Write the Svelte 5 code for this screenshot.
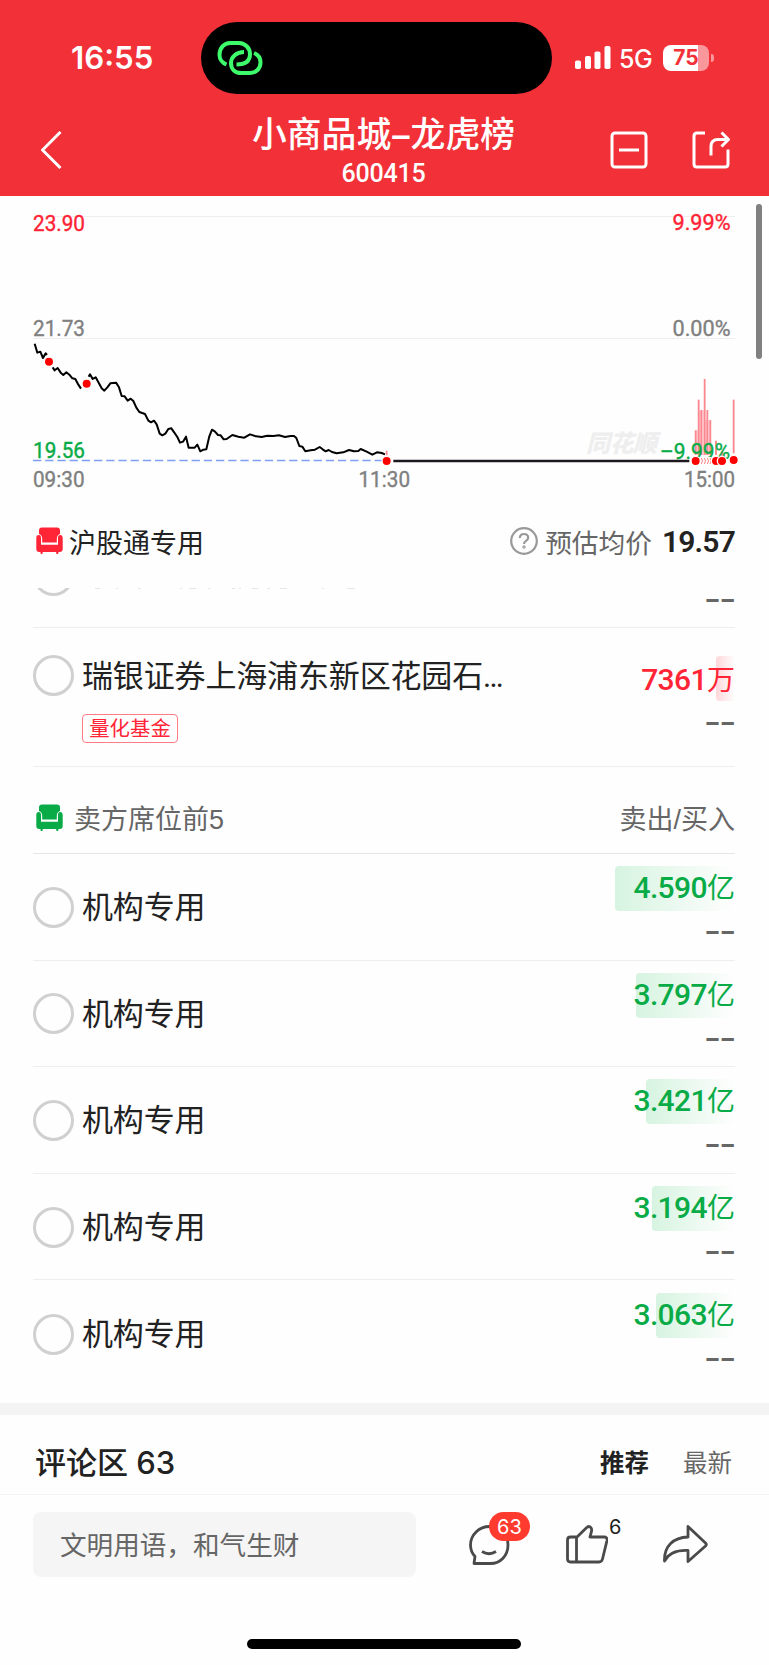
<script>
    // 卖方席位
    let sellers = [
        { id: 1, name: '机构专用', amount: '4.590', bar: 120 },
        { id: 2, name: '机构专用', amount: '3.797', bar: 99 },
        { id: 3, name: '机构专用', amount: '3.421', bar: 89 },
        { id: 4, name: '机构专用', amount: '3.194', bar: 83 },
        { id: 5, name: '机构专用', amount: '3.063', bar: 79 },
    ];

    // 分时线, 三倍坐标
    const lines = [
        '104,446 108,460 112,473 121,470 129,489 137,475 141,480',
        '158,517 164,526 173,519 182,533 190,540 199,532 208,539 217,550 226,552 235,569 243,581',
        '266,545 270,538 278,552 287,547 296,563 305,580 313,587 322,577 331,565 348,563 357,577 365,603 374,604 383,617 392,611 400,618 409,638 418,651 435,657 445,677 453,682 462,677 470,688 479,716 487,721 496,716 505,702 514,700 523,713 532,726 540,743 549,740 558,725 566,758 584,758 592,749 601,769 610,764 619,763 628,724 636,704 645,710 654,720 662,721 671,733 680,732 697,720 715,725 733,728 750,718 768,724 785,726 802,722 820,723 837,721 855,726 872,723 882,723 889,729 898,753 907,755 916,769 932,766 945,764 959,756 968,763 977,769 986,765 996,771 1010,775 1030,772 1047,765 1062,769 1075,768 1082,762 1100,770 1117,779 1131,772 1145,774 1155,778',
    ];

    // 成交柱: x, 顶部, 底部
    const volumes = [
        [947, 706, 780],
        [956, 614, 780],
        [964, 645, 780],
        [974, 552, 780],
        [982, 645, 780],
        [991, 675, 780],
        [1008, 737, 780],
        [1026, 768, 782],
        [1061, 614, 775],
    ];
    const arcs = [964, 973, 982, 990];
</script>

{#snippet chair()}
    <svg class="chair" viewBox="0 0 27 28">
        <path d="M6 .5h15q3 0 3 3v3.500q-3.200 1-3.200 5v3.500H6.200V12q0-4-3.200-5V3.500q0-3 3-3z" />
        <path d="M2.700 8q2.300 0 2.300 3v6.700h17V11q0-3 2.300-3t2.400 3v11q0 3-3 3h-1.200l-.4 2h-1.600l-.4-2H6.800l-.4 2H4.800l-.4-2H3.300q-3 0-3-3V11q0-3 2.400-3z" />
    </svg>
{/snippet}

<div class="page">
    <header>
        <div class="status">
            <span class="time">16:55</span>
            <div class="island">
                <svg width="46" height="36" viewBox="0 0 46 36" fill="none" stroke="#3dfb6b" stroke-width="4">
                    <path d="M9.500 24.500C5.500 23 2.500 19 2.500 15 2.500 7.500 7.500 3 13 3h9C28 3 33 8 33 14c0 7-5 10.500-13.500 10.500" />
                    <path d="M27 12C19.500 12 14 17 14 23c0 6 4 10 10 10h9c6 0 10.500-4.500 10.500-10.500 0-4.500-2.500-8-6.500-9.500" />
                </svg>
            </div>
            <svg class="signal" width="36" height="24" viewBox="0 0 36 24" fill="#fff">
                <rect x="0" y="14.500" width="6" height="8.500" rx="1.800" />
                <rect x="10" y="10" width="6" height="13" rx="1.800" />
                <rect x="19.500" y="5.500" width="6" height="17.500" rx="1.800" />
                <rect x="29.500" y="0" width="6" height="23" rx="1.800" />
            </svg>
            <span class="net">5G</span>
            <div class="battery"><span>75</span></div>
            <i class="tip"></i>
        </div>
        <nav>
            <svg class="back" width="22" height="38" viewBox="0 0 22 38" fill="none" stroke="#fff" stroke-width="3">
                <path d="M19.500 1 1.500 19l18 18" />
            </svg>
            <div class="title">
                <h1>小商品城<span>–</span>龙虎榜</h1>
                <p>600415</p>
            </div>
            <svg width="38" height="38" viewBox="0 0 38 38" fill="none" stroke="#fff" stroke-width="3">
                <rect x="2" y="2" width="34" height="34" rx="3" />
                <path d="M9 19h20" />
            </svg>
            <svg class="out" width="38" height="38" viewBox="0 0 38 38" fill="none" stroke="#fff" stroke-width="3">
                <path d="M13 2H5Q2 2 2 5v28q0 3 3 3h28q3 0 3-3V18.500" />
                <path d="M19 24.500v-9q0-7 7-7h10M29.500 1.500 36.500 8.500l-7 7" />
            </svg>
        </nav>
    </header>

    <svg class="chart" viewBox="0 196 769 304">
        <g stroke="#eee" stroke-width="1">
            <path d="M33 216.500h702M33 338.500h702" />
        </g>
        <path d="M33 460.500h355" stroke="#7f9ef4" stroke-width="1.600" stroke-dasharray="8.300 3.900" />
        <text class="mark" x="586" y="452" textLength="71">同花顺</text>
        <g transform="translate(380 195) scale(.33333)">
            <path d="M947 706h9v-60h18v30h17v104h-44z" fill="#ffd3d7" />
            {#each volumes as [x, top, bottom]}
                <path d="M{x} {top}V{bottom}" stroke="#fb8790" stroke-width="5.500" />
            {/each}
        </g>
        <g class="num">
            <text class="red" x="33" y="230.500" textLength="52" lengthAdjust="spacingAndGlyphs">23.90</text>
            <text class="red" x="672.500" y="230" textLength="58" lengthAdjust="spacingAndGlyphs">9.99%</text>
            <text x="33" y="336" textLength="52" lengthAdjust="spacingAndGlyphs">21.73</text>
            <text x="672.500" y="336" textLength="58" lengthAdjust="spacingAndGlyphs">0.00%</text>
            <text class="green" x="33" y="458" textLength="52" lengthAdjust="spacingAndGlyphs">19.56</text>
            <text class="green" x="660" y="458.500" textLength="70" lengthAdjust="spacingAndGlyphs">–9.99%</text>
            <text x="33" y="487" textLength="51.500" lengthAdjust="spacingAndGlyphs">09:30</text>
            <text x="358.500" y="487" textLength="51.500" lengthAdjust="spacingAndGlyphs">11:30</text>
            <text x="684" y="487" textLength="51" lengthAdjust="spacingAndGlyphs">15:00</text>
        </g>
        <g transform="translate(0 195) scale(.33333)">
            {#each lines as points}
                <polyline {points} fill="none" stroke="#000" stroke-width="6" stroke-linejoin="round" />
            {/each}
            <path d="M1180 798h888" stroke="#1d1820" stroke-width="7.500" />
            <path d="M1160 767v14" stroke="#fb8790" stroke-width="5" />
            <g class="dots">
                <circle cx="147" cy="500" r="14" />
                <circle cx="260" cy="566" r="14" />
                <circle cx="1160" cy="798" r="14" />
            </g>
        </g>
        <g transform="translate(380 195) scale(.33333)">
            <rect x="960" y="786" width="34" height="24" fill="#fff" />
            {#each arcs as x}
                <path d="M{x} 789q7 9 0 18" fill="none" stroke="#ff6b6b" stroke-width="2.500" />
            {/each}
            <g class="dots">
                <circle cx="947" cy="798" r="14" />
                <circle cx="1008" cy="798" r="14" />
                <circle cx="1026" cy="798" r="14" />
                <circle cx="1061" cy="795" r="14" />
            </g>
        </g>
    </svg>
    <div class="scrollbar"></div>

    <div class="seat red">
        {@render chair()}
        <strong>沪股通专用</strong>
        <svg class="help" width="28" height="28" viewBox="0 0 28 28" fill="none" stroke="#999" stroke-width="2.200">
            <circle cx="14" cy="14" r="12.800" />
            <path d="M9.800 11q.2-4 4.200-4t4.200 3.600q0 2-2.200 3.300-2 1.200-2 3" />
            <circle cx="14" cy="20" r=".6" />
        </svg>
        <span class="label">预估均价</span>
        <b>19.57</b>
    </div>

    <div class="list">
        <div class="cut">
            <div class="clip"><i class="radio"></i></div>
            <svg width="264" height="2" viewBox="0 0 264 2" fill="none" stroke="#e6e6e6">
                <path d="M0 .5h5M21 .5h2M43 .5h3M85 .5h2M94 .5h7M113 .5h2M137 .5h3M144 .5h2M157 .5h6M172 .5h3M185 .5h7M227 .5h2M252 .5h8" />
            </svg>
            <em>--</em>
        </div>

        <div class="row ubs">
            <i class="radio"></i>
            <div class="who">
                <span class="name">瑞银证券上海浦东新区花园石<span class="more">...</span></span>
                <span class="tag">量化基金</span>
            </div>
            <div class="money red">
                <div class="amount"><i style="width: 19px"></i><b>7361</b><span>万</span></div>
                <em>--</em>
            </div>
        </div>

        <div class="group green">
            {@render chair()}
            <span>卖方席位前5</span>
            <span class="right">卖出/买入</span>
        </div>

        {#each sellers as seller (seller.id)}
            <div class="row">
                <i class="radio"></i>
                <span class="name">{seller.name}</span>
                <div class="money green">
                    <div class="amount"><i style="width: {seller.bar}px"></i><b>{seller.amount}</b><span>亿</span></div>
                    <em>--</em>
                </div>
            </div>
        {/each}
    </div>

    <div class="comments">
        <h2>评论区 63</h2>
        <span class="on">推荐</span>
        <span>最新</span>
    </div>

    <footer>
        <div class="input">文明用语，和气生财</div>
        <div class="action">
            <svg width="42" height="42" viewBox="0 0 42 42">
                <path d="M6 39.500h16.500C32.500 39.500 40 31.500 40 21 40 10 32 2.500 21.500 2.500S2.500 11 2.500 21c0 5 1.700 8.500 4.500 11.500z" />
                <path d="M14 27.500q7 4.500 14 0" />
            </svg>
            <span class="badge">63</span>
        </div>
        <div class="action like">
            <svg width="42" height="40" viewBox="0 0 42 40">
                <path d="M4.500 13h6.500L21 3.300q2.500-1.800 4 .5 1 1.500.5 3.500L24 13h14q3.500 0 3 3.500l-4.500 18.500Q35.700 38 33 38H4.500Q1.500 38 1.500 35V16q0-3 3-3z" />
                <path d="M10.500 13v25" />
            </svg>
            <span class="count">6</span>
        </div>
        <div class="action share">
            <svg width="46" height="40" viewBox="0 0 46 40">
                <path d="M26 2.500 43.500 19q1.500 1.500 0 3L26 37.500V26.500C14.500 26 6.500 29.500 2.500 37 2 22 11.500 13.500 26 13z" />
            </svg>
        </div>
    </footer>
    <div class="home"></div>
</div>

<style>
    :global(body) {
        background: #fff;
    }

    .page {
        position: relative;
        width: 769px;
        height: 1665px;
        display: flex;
        flex-direction: column;
        overflow: hidden;
        background: #fefefe;
        color: #222;
        font-family: 'Liberation Sans', 'Noto Sans CJK SC', sans-serif;
    }

    svg {
        display: block;
        flex: none;
    }

    h1, h2, p {
        margin: 0;
    }

    i, em {
        font-style: normal;
    }

    header {
        height: 196px;
        flex: none;
        box-sizing: border-box;
        background: #f23038;
        color: #fff;
        padding-top: 22px;
    }

    .status {
        display: flex;
        align-items: center;
        height: 72px;
        padding-left: 71px;
        font-family: Inter, sans-serif;
    }

    .time {
        width: 130px;
        padding-bottom: 1px;
        font-size: 31.200px;
        font-weight: 600;
    }

    .island {
        width: 351px;
        height: 72px;
        box-sizing: border-box;
        padding: 18px 0 0 16px;
        border-radius: 36px;
        background: #000;
    }

    .signal {
        margin: 0 8px 0 23px;
    }

    .net {
        width: 44px;
        padding-top: 1px;
        font-size: 25px;
        font-weight: 500;
        letter-spacing: -0.5px;
    }

    .battery {
        width: 46px;
        height: 26px;
        border-radius: 8px;
        background: linear-gradient(90deg, #fff 35px, #f9979b 35px);
        color: #f23038;
        font-size: 21px;
        font-weight: 700;
        line-height: 26px;
        text-align: center;
    }

    .tip {
        width: 3px;
        height: 8px;
        margin-left: 2px;
        border-radius: 0 4px 4px 0;
        background: #f9979b;
    }

    nav {
        display: flex;
        align-items: center;
        height: 102px;
        padding: 0 39px 0 41px;
    }

    nav svg {
        margin-top: 10px;
    }

    nav .out {
        margin-left: 44px;
    }

    .title {
        flex: 1;
        margin: 7px 0 0 161px;
        padding-right: 67px;
        text-align: center;
    }

    h1 {
        font: 500 34.800px/46px 'Noto Sans CJK SC', sans-serif;
        white-space: nowrap;
    }

    h1 span {
        font-family: 'Liberation Sans', sans-serif;
        font-weight: 700;
    }

    .title p {
        padding-top: 2px;
        font: 500 25px/28px Roboto, sans-serif;
        letter-spacing: -0.200px;
    }

    .chart {
        width: 769px;
        height: 304px;
    }

    .num {
        font: 400 22.500px Roboto, sans-serif;
        fill: #808080;
        stroke: #808080;
        stroke-width: 0.400;
    }

    .num .red {
        fill: #ff2436;
        stroke: #ff2436;
    }

    .num .green {
        fill: #09ab47;
        stroke: #09ab47;
    }

    .mark {
        font: italic 900 24px 'Noto Sans CJK SC', sans-serif;
        fill: #eee;
    }

    .dots circle {
        fill: #f00;
        stroke: #fff;
        stroke-width: 4;
    }

    .scrollbar {
        position: absolute;
        top: 204px;
        right: 7px;
        width: 6px;
        height: 155px;
        border-radius: 3px;
        background: #808080;
    }

    .seat {
        display: flex;
        align-items: center;
        height: 88px;
        flex: none;
        box-sizing: border-box;
        padding: 0 34px 6px 36px;
    }

    .chair {
        width: 27px;
        height: 28px;
        fill: #ff2436;
    }

    .green .chair {
        margin-top: 1px;
        fill: #09ab47;
    }

    .seat strong {
        flex: 1;
        margin-left: 6px;
        font-weight: 400;
        font-size: 27px;
    }

    .label {
        margin: 0 10px 0 7px;
        font-size: 26.700px;
        color: #666;
    }

    .seat b {
        font: 600 30px Roboto, sans-serif;
        letter-spacing: -0.800px;
    }

    .list {
        padding: 0 34px 0 33px;
    }

    .cut {
        display: flex;
        height: 39px;
        border-bottom: 1px solid #eee;
    }

    .clip {
        display: flex;
        align-items: flex-end;
        width: 62px;
        height: 8px;
        overflow: hidden;
    }

    .cut em {
        margin: -10px 1px 0 auto;
    }

    em {
        font: 400 38px/40px Inter, sans-serif;
        letter-spacing: -2.400px;
        margin-right: 1px;
        color: #666;
    }

    .radio {
        flex: none;
        width: 41px;
        height: 41px;
        box-sizing: border-box;
        border: 3px solid #d0d0d0;
        border-radius: 50%;
    }

    .row {
        display: flex;
        align-items: center;
        height: 106.600px;
        box-sizing: border-box;
        padding-top: 1px;
        border-bottom: 1px solid #eee;
    }

    .row:last-child {
        border-bottom: 0;
    }

    .name {
        margin-left: 8px;
        padding-top: 2px;
        font-size: 31px;
        line-height: 40px;
        letter-spacing: -0.150px;
    }

    .ubs {
        height: 139px;
        align-items: flex-start;
        padding-top: 27px;
    }

    .ubs .name {
        display: block;
    }

    .more {
        font-family: Roboto, sans-serif;
        letter-spacing: -1.800px;
    }

    .tag {
        display: block;
        width: 96px;
        height: 29px;
        box-sizing: border-box;
        margin: 17px 0 0 8px;
        border: 1px solid #ff7c86;
        border-radius: 4px;
        color: #ff2436;
        font-size: 20.400px;
        line-height: 28px;
        text-align: center;
    }

    .money {
        display: flex;
        flex-direction: column;
        align-items: flex-end;
        margin-left: auto;
        padding-top: 2px;
        color: #09ab47;
    }

    .money em {
        margin-top: -1px;
    }

    .money.red {
        padding-top: 2px;
        color: #ff2436;
    }

    .money.red em {
        margin-top: -1px;
    }

    .amount {
        position: relative;
        height: 45px;
        font-size: 28px;
        line-height: 46px;
        white-space: nowrap;
    }

    .red .amount {
        line-height: 47px;
    }

    .amount i {
        position: absolute;
        top: 0;
        right: 0;
        height: 45px;
        border-radius: 4px;
        background: linear-gradient(90deg, rgba(9, 190, 71, 0.160), rgba(9, 190, 71, 0));
    }

    .red .amount i {
        top: -1px;
        background: linear-gradient(90deg, rgba(255, 36, 54, 0.180), rgba(255, 36, 54, 0));
    }

    .amount span {
        position: relative;
    }

    .amount b {
        position: relative;
        font: 500 30px Roboto, sans-serif;
        letter-spacing: -0.600px;
    }

    .group {
        display: flex;
        align-items: center;
        height: 87px;
        box-sizing: border-box;
        padding: 15px 0 0 3px;
        border-bottom: 1px solid #e6e6e6;
        color: #666;
        font-size: 27px;
    }

    .group span {
        margin-left: 11px;
    }

    .group .right {
        margin-left: auto;
    }

    .comments {
        display: flex;
        align-items: center;
        height: 92px;
        box-sizing: border-box;
        flex: none;
        margin-top: 16px;
        border-top: 12px solid #f4f4f4;
        border-bottom: 1px solid #f4f4f4;
        padding: 15px 37px 0 35px;
        font-size: 24.500px;
        color: #666;
    }

    h2 {
        flex: 1;
        margin-top: -2px;
        font: 500 31px Inter, 'Noto Sans CJK SC', sans-serif;
        color: #222;
    }

    .comments span {
        margin-left: 34px;
    }

    .comments .on {
        font-weight: 700;
        color: #222;
    }

    footer {
        display: flex;
        padding: 17px 33px 0;
    }

    .input {
        width: 383px;
        height: 65px;
        box-sizing: border-box;
        padding: 2px 0 0 27px;
        border-radius: 8px;
        background: #f5f5f5;
        color: #666;
        font-size: 26.600px;
        line-height: 65px;
    }

    .action {
        position: relative;
        margin: 12px 0 0 52px;
    }

    .action path {
        fill: none;
        stroke: #4a4a4a;
        stroke-width: 2.800;
        stroke-linejoin: round;
    }

    .like {
        margin-left: 56px;
    }

    .share {
        margin-left: 54px;
    }

    .badge {
        position: absolute;
        left: 21px;
        top: -12px;
        width: 41px;
        height: 29px;
        border-radius: 15px;
        background: #ff3b30;
        color: #fff;
        font: 400 20px/30px Inter, sans-serif;
        text-align: center;
    }

    .count {
        position: absolute;
        left: 43px;
        top: -11px;
        font: 400 20px/28px Inter, sans-serif;
    }

    .home {
        position: absolute;
        left: 247px;
        top: 1639px;
        width: 274px;
        height: 10px;
        border-radius: 5px;
        background: #000;
    }
</style>
